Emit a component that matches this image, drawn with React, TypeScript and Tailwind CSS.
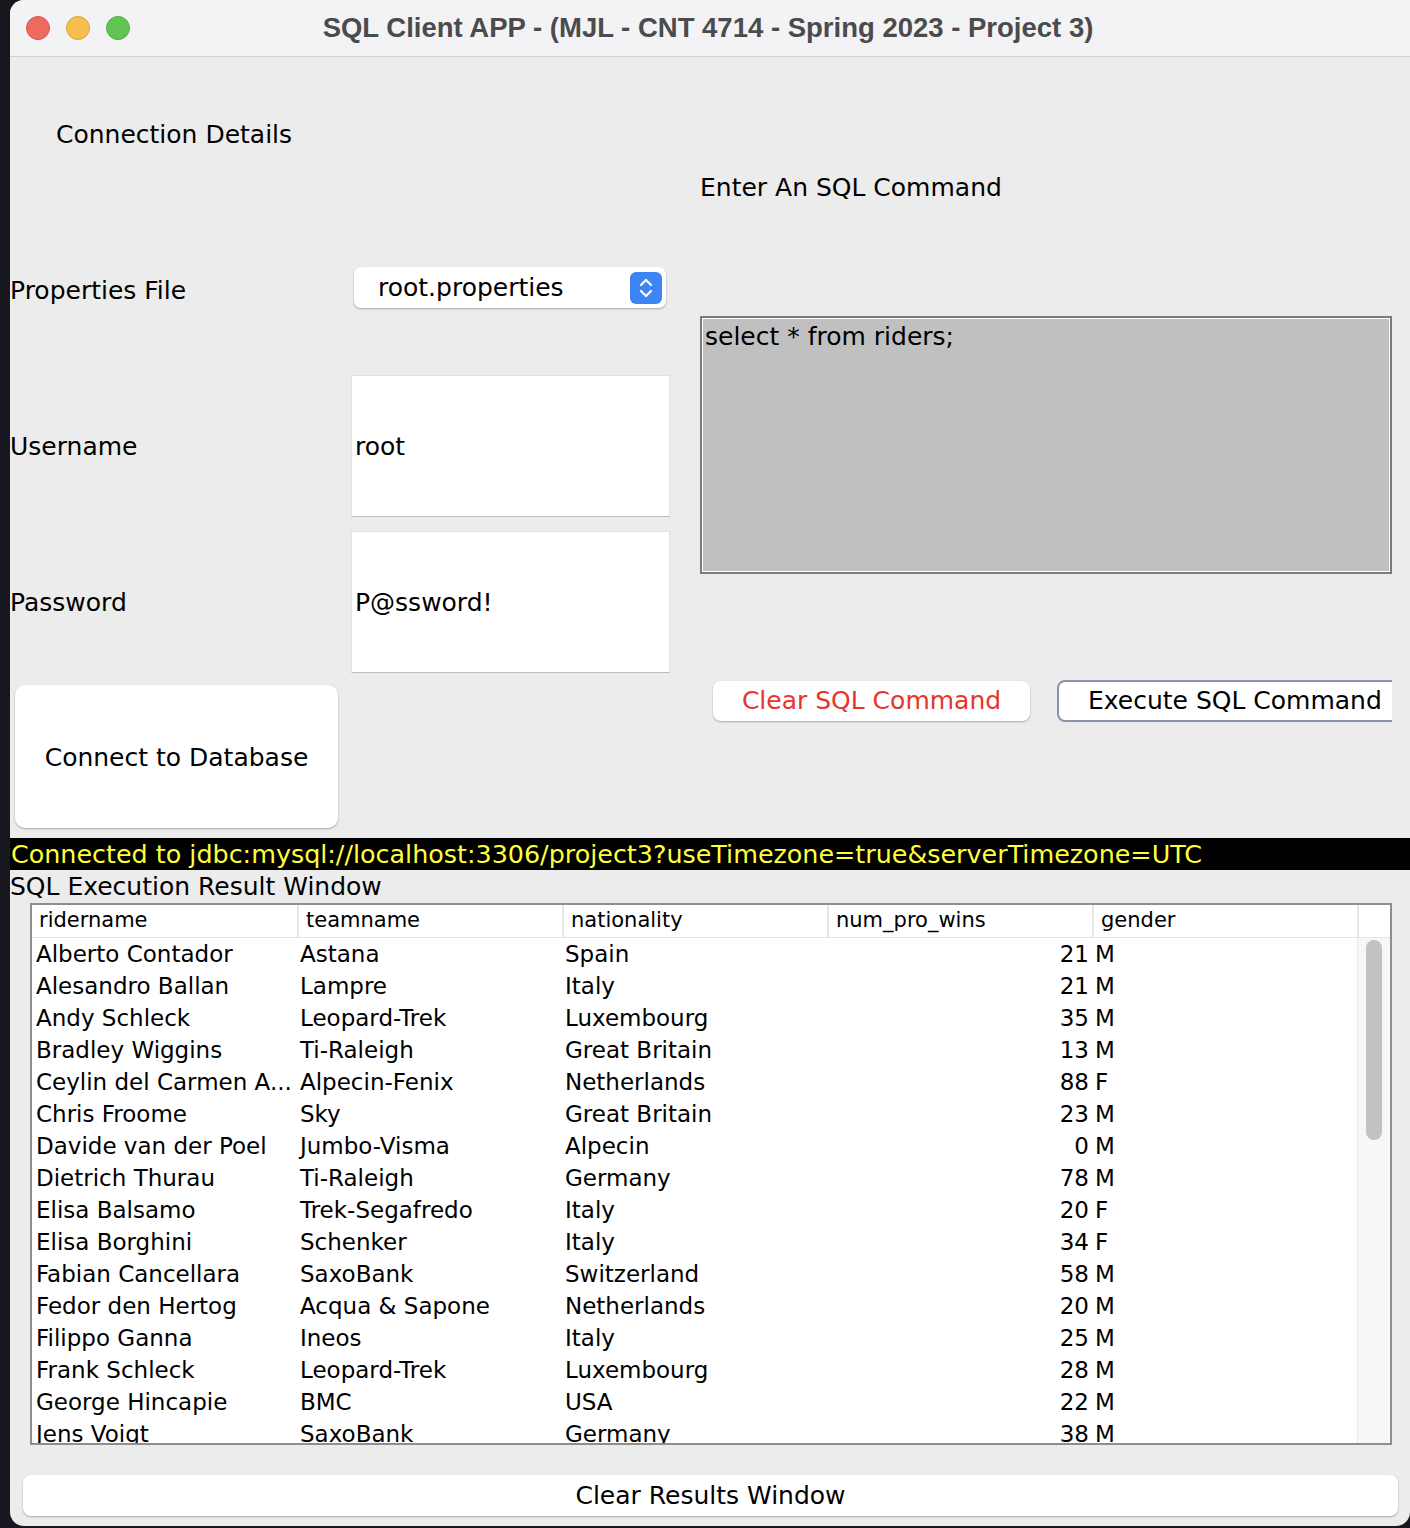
import React from "react";

const rows: [string, string, string, string, string][] = [
  ["Alberto Contador", "Astana", "Spain", "21", "M"],
  ["Alesandro Ballan", "Lampre", "Italy", "21", "M"],
  ["Andy Schleck", "Leopard-Trek", "Luxembourg", "35", "M"],
  ["Bradley Wiggins", "Ti-Raleigh", "Great Britain", "13", "M"],
  ["Ceylin del Carmen A...", "Alpecin-Fenix", "Netherlands", "88", "F"],
  ["Chris Froome", "Sky", "Great Britain", "23", "M"],
  ["Davide van der Poel", "Jumbo-Visma", "Alpecin", "0", "M"],
  ["Dietrich Thurau", "Ti-Raleigh", "Germany", "78", "M"],
  ["Elisa Balsamo", "Trek-Segafredo", "Italy", "20", "F"],
  ["Elisa Borghini", "Schenker", "Italy", "34", "F"],
  ["Fabian Cancellara", "SaxoBank", "Switzerland", "58", "M"],
  ["Fedor den Hertog", "Acqua & Sapone", "Netherlands", "20", "M"],
  ["Filippo Ganna", "Ineos", "Italy", "25", "M"],
  ["Frank Schleck", "Leopard-Trek", "Luxembourg", "28", "M"],
  ["George Hincapie", "BMC", "USA", "22", "M"],
  ["Jens Voigt", "SaxoBank", "Germany", "38", "M"],
];

const headers = ["ridername", "teamname", "nationality", "num_pro_wins", "gender"];

const App = () => {
  return (
    <div className="w-[1410px] h-[1528px] bg-[#17171f] overflow-hidden font-['DejaVu_Sans',sans-serif] text-black">
      <div className="ml-[10px] w-[1400px] h-[1526px] bg-[#ececec] rounded-tl-[14px] rounded-bl-[14px] rounded-br-[14px] overflow-hidden flex flex-col">
        {/* title bar */}
        <div className="h-[57px] shrink-0 bg-[#f3f3f5] border-b border-[#d2d2d4] flex items-center relative">
          <div className="flex gap-[16px] pl-[16px]">
            <span className="w-[24px] h-[24px] rounded-full bg-[#ee6a5f] border border-[#d9574c]" />
            <span className="w-[24px] h-[24px] rounded-full bg-[#f5be4f] border border-[#dca33c]" />
            <span className="w-[24px] h-[24px] rounded-full bg-[#61c554] border border-[#50ad44]" />
          </div>
          <div className="absolute inset-0 flex items-center justify-center pr-[4px] font-['Liberation_Sans',sans-serif] font-bold text-[27.5px] text-[#4b4b4d]">
            SQL Client APP - (MJL - CNT 4714 - Spring 2023 - Project 3)
          </div>
        </div>

        {/* top section */}
        <div className="h-[781px] shrink-0 flex">
          {/* left column */}
          <div className="w-[690px] flex flex-col text-[25px]">
            <div className="h-[193px] pt-[63px] pl-[46px] leading-[30px]">Connection Details</div>
            <div className="mt-[17px] h-[41px] flex items-center">
              <div className="w-[344px] pt-[6px]">Properties File</div>
              <div className="w-[312px] h-[41px] bg-white rounded-[7px] shadow-[0_1px_2px_rgba(0,0,0,0.3)] flex items-center pl-[24px] pr-[4px]">
                <span className="flex-1">root.properties</span>
                <span className="w-[32px] h-[32px] rounded-[6px] bg-[#3d85f4] flex items-center justify-center">
                  <svg width="16" height="24" viewBox="0 0 16 24" fill="none" stroke="white" strokeWidth="2.2" strokeLinecap="round" strokeLinejoin="round">
                    <path d="M3 9 L8 4 L13 9" />
                    <path d="M3 15 L8 20 L13 15" />
                  </svg>
                </span>
              </div>
            </div>
            <div className="mt-[67px] h-[142px] flex items-center">
              <div className="w-[341px] pt-[2px]">Username</div>
              <div className="w-[319px] h-[142px] bg-white border border-[#e2e2e2] border-b-[#bdbdbd] flex items-center pl-[3px] pt-[2px]">root</div>
            </div>
            <div className="mt-[14px] h-[142px] flex items-center">
              <div className="w-[341px] pt-[2px]">Password</div>
              <div className="w-[319px] h-[142px] bg-white border border-[#e2e2e2] border-b-[#bdbdbd] flex items-center pl-[3px] pt-[2px]">P@ssword!</div>
            </div>
            <div className="mt-[12px] ml-[5px] w-[323px] h-[143px] bg-white rounded-[10px] shadow-[0_1px_2px_rgba(0,0,0,0.3)] flex items-center justify-center pt-[2px]">
              Connect to Database
            </div>
          </div>

          {/* right column */}
          <div className="w-[692px] overflow-hidden flex flex-col text-[25px]">
            <div className="mt-[116px] h-[30px] leading-[30px]">Enter An SQL Command</div>
            <div className="mt-[113px] h-[258px] w-[692px] border-2 border-[#7b7b7b] bg-white p-[1px]">
              <div className="w-full h-full bg-[#c0c0c0] pl-[2px] leading-[36px]">select * from riders;</div>
            </div>
            <div className="mt-[106px] flex items-center">
              <div className="ml-[13px] w-[317px] h-[40px] shrink-0 bg-white rounded-[8px] shadow-[0_1px_2px_rgba(0,0,0,0.3)] flex items-center justify-center text-[#e8352a]">
                Clear SQL Command
              </div>
              <div className="ml-[27px] w-[350px] h-[42px] shrink-0 bg-white rounded-[8px] border-2 border-[#8895a8] flex items-center pl-[29px]">
                Execute SQL Command
              </div>
            </div>
          </div>
        </div>

        {/* connection status */}
        <div className="h-[32px] shrink-0 bg-black text-[#ffff3c] text-[25.4px] leading-[32px] pl-[1px] whitespace-nowrap">
          Connected to jdbc:mysql://localhost:3306/project3?useTimezone=true&amp;serverTimezone=UTC
        </div>
        <div className="h-[33px] shrink-0 text-[25px] leading-[33px] whitespace-nowrap">SQL Execution Result Window</div>

        {/* results table */}
        <div className="ml-[20px] w-[1362px] h-[542px] shrink-0 border-2 border-[#8e8e8e] bg-white flex flex-col overflow-hidden text-[23px]">
          <div className="h-[33px] shrink-0 flex border-b border-[#e4e4e4] text-[21px]">
            {headers.map((h, i) => (
              <div
                key={h}
                className={`w-[265px] shrink-0 pl-[7px] leading-[31px] ${i > 0 ? "border-l-2 border-[#e6e6e6]" : ""}`}
              >
                {h}
              </div>
            ))}
            <div className="flex-1 border-l-2 border-[#e6e6e6]" />
          </div>
          <div className="flex-1 flex overflow-hidden">
            <div className="w-[1325px] shrink-0 flex flex-col">
              {rows.map((r) => (
                <div key={r[0]} className="h-[32px] shrink-0 flex leading-[32px] whitespace-nowrap">
                  <div className="w-[265px] shrink-0 pl-[4px]">{r[0]}</div>
                  <div className="w-[265px] shrink-0 pl-[3px]">{r[1]}</div>
                  <div className="w-[265px] shrink-0 pl-[3px]">{r[2]}</div>
                  <div className="w-[265px] shrink-0 pr-[3px] text-right">{r[3]}</div>
                  <div className="w-[265px] shrink-0 pl-[3px]">{r[4]}</div>
                </div>
              ))}
            </div>
            <div className="flex-1 bg-[#f7f7f7] border-l border-[#e8e8e8] pt-[2px] flex justify-center">
              <div className="w-[16px] h-[200px] rounded-full bg-[#c2c2c2]" />
            </div>
          </div>
        </div>

        <div className="mt-[30px] ml-[13px] w-[1375px] h-[41px] shrink-0 bg-white rounded-[8px] shadow-[0_1px_2px_rgba(0,0,0,0.3)] flex items-center justify-center text-[25px]">
          Clear Results Window
        </div>
      </div>
    </div>
  );
};

export default App;
